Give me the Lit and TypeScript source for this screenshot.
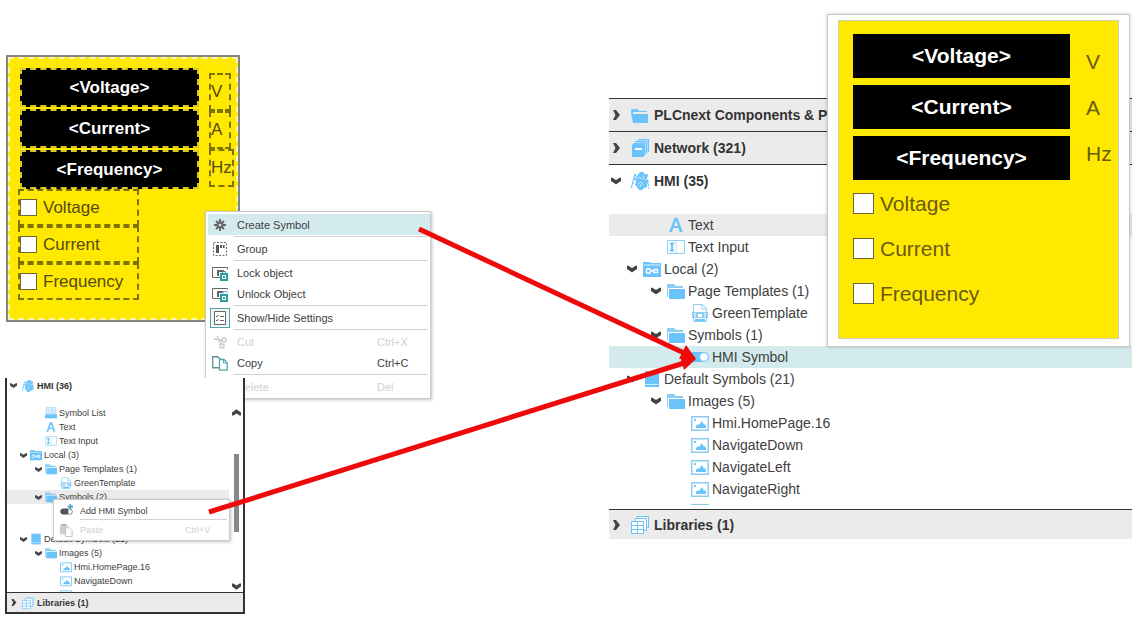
import { LitElement, html, svg, css, nothing } from "lit";
import { customElement, property } from "lit/decorators.js";
import { classMap } from "lit/directives/class-map.js";

const BLUE = "#6ac4fb";
const SOFT = "#8dcdf2";
const TEAL = "#2a9d9d";

const treeIcons: Record<string, unknown> = {
  folder: svg`<path fill="${BLUE}" d="M0 3h7l1 2h8v1H2v2h15v9H2L0 8z"/><path fill="${SOFT}" d="M0 3h6v1H1v4H0z"/>`,
  folderOpen: svg`<path fill="${SOFT}" d="M0 2h7l2 2h7v2H0z"/><path fill="${SOFT}" d="M0 5h1v10H0z"/><path fill="${BLUE}" d="M2 7h16v10H2z"/>`,
  network: svg`<path fill="${BLUE}" d="M7 0h11v12l-2 2V2H7z"/><path fill="${BLUE}" d="M4 2h12v12l-2 2V4H4z"/><path fill="${BLUE}" d="M1 6l2-2h11v12l-2 2H1z"/><path fill="#fff" d="M4 9h7v2H4z"/><path d="M3.500 3.500h11v12M6.500 1.500h10v12" fill="none" stroke="#c9eafd" stroke-width=".7"/>`,
  hmi: svg`<g fill="${BLUE}"><path d="M9 0h3l2 2 2 1v4l2 2-2 3v3l-3 1-2 2H8l-2-3-2-2 1-3-1-3 2-3z"/></g><path d="M5 2 1 14M4 2 0 16h2M16 2l1 3M17 11l1 6" stroke="${BLUE}" stroke-width="1.2" stroke-dasharray="3 1" fill="none"/><path d="m6 7 3-2 2 3M12 3l1 4 3 1M7 12l3-2 3 3M9 15l1-3" stroke="#e3f5ff" stroke-width=".7" fill="none"/>`,
  list: svg`<path d="M2 1h14v9H2z" fill="#e3f4fe" stroke="${SOFT}"/><path d="M5 4h2m2 0h4M5 7h2m2 0h4" stroke="${BLUE}"/><path d="M0 11h18v6H0z" fill="${BLUE}"/>`,
  text: svg`<path fill="${BLUE}" fill-rule="evenodd" d="M7.500 2h3.200l5 14h-3l-1.200-4H6.300L5 16H2zM7 10h4L9 4.800z"/>`,
  input: svg`<path d="M.5 2.500h17v13H.5z" fill="#fff" stroke="${SOFT}"/><path d="M3 5.500h4M5 5.500v7M3 12.500h4" stroke="${BLUE}" stroke-width="2"/><path d="M9 3v12" stroke="${SOFT}" stroke-width=".6"/>`,
  local: svg`<path fill="${BLUE}" d="M0 2h7l1 1h10v14H0z"/><path d="M1 5h16" stroke="#d9f0fe"/><g stroke="#fff" fill="none" stroke-width="1.400"><circle cx="5.500" cy="11" r="2.200"/><path d="M8 11h3M11 9.500h3.500v3H11z"/></g>`,
  template: svg`<path d="M2.500.5h9l4 4v13h-13z" fill="#fff" stroke="${SOFT}"/><path d="M11 1v4h4" fill="none" stroke="${SOFT}"/><path d="M1 8h16v6H1z" fill="${SOFT}"/><path d="m5 9-2 2 2 2m8-4 2 2-2 2" stroke="#fff" fill="none"/><path d="M7 10h4v3H7z" fill="#fff"/><path d="M4 16h10" stroke="${BLUE}" stroke-width="2"/>`,
  toggle: svg`<path d="M0 4h13a5 5 0 0 1 0 10H0z" fill="${BLUE}"/><circle cx="13" cy="9" r="4.200" fill="#fff" stroke="${SOFT}"/>`,
  book: svg`<path fill="${BLUE}" d="M2 1h14v16H2z"/><path d="M2 14.500h13" stroke="#c7e9fd"/>`,
  image: svg`<path d="M.75 2.750h16.500v13.500H.75z" fill="#fff" stroke="${SOFT}" stroke-width="1.500"/><path fill="${BLUE}" d="M5 14v-2l2-2 1 1 3-4 2 4 1-1 1 2v2zM3 5h2v2H3z"/>`,
  libs: svg`<g fill="#fff" stroke="${BLUE}"><path d="M6.500.5h11v11h-11z"/><path d="M4.500 2.500h11v12h-11z"/><path d="M.5 5.500h12v12H.5z"/><path d="M.5 9.500h12M.5 13.500h12M6.500 5.500v12"/></g>`,
};

const menuIcons: Record<string, unknown> = {
  create: svg`<g stroke="#666" stroke-width="2"><path d="M8 2v12M2 8h12M4 4l8 8M12 4l-8 8"/></g><circle cx="8" cy="8" r="3.500" fill="#666"/><circle cx="8" cy="8" r="1.300" fill="#d5ecee"/>`,
  group: svg`<path d="M1.500 1.500h13v13h-13z" fill="none" stroke="#666" stroke-dasharray="2 1.500"/><path d="M4 4h3v8H4zM8 4h2v3H8zM11 4h1.500v3H11z" fill="#555"/>`,
  lock: svg`<path d="M.5 2.500h15v2M.5 2.500v10H9" fill="none" stroke="#666"/><path d="M5 5h7v2H7v4H5z" fill="#666"/><path d="M9 9h6v6H9z" fill="#fff" stroke="${TEAL}" stroke-width="2"/><path d="M10.500 9V6.500h3V9" fill="none" stroke="${TEAL}"/><path d="M11 11h2v2h-2z" fill="${TEAL}"/>`,
  unlock: svg`<path d="M.5 2.500h15v1M.5 2.500v10H9" fill="none" stroke="#666"/><path d="M5 5h6v2H7v4H5z" fill="#666"/><path d="M9 9h6v6H9z" fill="#fff" stroke="${TEAL}" stroke-width="2"/><path d="M11 9V5.500h4V7" fill="none" stroke="#6ab6cf"/><path d="M11 11h2v2h-2z" fill="${TEAL}"/>`,
  settings: svg`<path d="M2.500 1.500h11v13h-11z" fill="#fff" stroke="#666"/><path d="m4 6 1 1 1.500-2M4 10l1 1 1.500-2M8 6.500h4M8 10.500h4" fill="none" stroke="#666"/>`,
  cut: svg`<g fill="none" stroke="#c9c9c9" stroke-width="1.500"><circle cx="12" cy="6" r="2"/><circle cx="10" cy="12" r="2"/><path d="m2 5 8 1.500M5 2l4 8"/></g>`,
  copy: svg`<path d="M.75 1.750h5l3 3v8h-8z" fill="#fff" stroke="#6b8a8a" stroke-width="1.300"/><path d="M7.500 4.500h4.500l3.200 3.200v7.500H7.500z" fill="#fff" stroke="#53a6aa" stroke-width="1.300"/><path d="M11.500 4.500V8h3.500" fill="none" stroke="#53a6aa"/>`,
  remove: svg`<path d="m3 3 10 10M13 3 3 13" stroke="#ccc" stroke-width="2"/>`,
  add: svg`<path d="M5 5h6v7H5a3.500 3.500 0 0 1 0-7z" fill="#555"/><path d="M11 5.500h1a3 3 0 0 1 0 6.500h-1" fill="#fff" stroke="#777"/><path d="M13 0v6M10 3h6" stroke="#3e9fc4" stroke-width="1.800"/>`,
  paste: svg`<path d="M1 2h9v11H1z" fill="#cfcfcf"/><path d="M3 1h5v2H3z" fill="#aaa"/><path d="M7.500 5.500H12l3 3v7H7.500z" fill="#fff" stroke="#bbb"/>`,
};

const chevron = (open: boolean) => html`<svg class="chev" viewBox="0 0 10 10" aria-hidden="true">
  ${open
    ? svg`<path fill="#444" d="M0 2l1-.5L5 4l4-2.500 1 .5v3L5 8.500 0 5z"/>`
    : svg`<path fill="#444" d="M2 0h3l4 5-4 5H2l2.500-5z"/>`}
</svg>`;

interface Node {
  label: string;
  icon?: string;
  level: number;
  open?: boolean;
  tone?: "grey" | "teal";
}

interface Section {
  label: string;
  icon: string;
  open?: boolean;
  nodes?: Node[];
}

interface MenuItem {
  label: string;
  icon: string;
  keys?: string;
  off?: boolean;
  active?: boolean;
  boxed?: boolean;
  line?: boolean;
}

@customElement("component-tree")
class ComponentTree extends LitElement {
  @property({ attribute: false }) sections: Section[] = [];
  @property({ type: Boolean, reflect: true }) compact = false;

  static styles = css`
    :host {
      display: block;
      background: #fff;
      --font: 14px;
      --row: 22px;
      --step: 24px;
      --lead: 18px;
      --chev: 10px;
      --chev-gap: 6px;
      --icon: 18px;
      --icon-gap: 3px;
      --head: 32px;
      --head-pad: 2px;
      --head-gap: 10px;
      --head-icon-gap: 5px;
      --peek: 5px;
      --peek-gap: 4px;
      font-size: var(--font);
      color: #404040;
    }
    :host([compact]) {
      --font: 9px;
      --row: 14px;
      --step: 15px;
      --lead: 13px;
      --chev: 7px;
      --chev-gap: 3px;
      --icon: 12px;
      --icon-gap: 2px;
      --head: 19px;
      --head-pad: 3px;
      --head-gap: 5px;
      --head-icon-gap: 3px;
      --peek: 4px;
      --peek-gap: 0px;
      border: 2px solid #333;
      border-top: 0;
    }
    svg { flex: none; display: block; }
    .chev { width: var(--chev); height: var(--chev); }
    .ico { width: var(--icon); height: var(--icon); }
    button {
      font: inherit;
      color: inherit;
      background: none;
      border: 0;
      padding: 0;
      margin: 0;
      display: flex;
      align-items: center;
      width: 100%;
      text-align: left;
      white-space: nowrap;
    }
    .head {
      height: calc(var(--head) + 1px);
      padding-left: var(--head-pad);
      border-top: 1px solid #333;
      background: #ebebeb;
      font-weight: bold;
      color: #333;
    }
    .head.open { background: #fff; }
    :host([compact]) .head.open { border-top: 0; height: 15px; }
    .head .ico { margin: 0 var(--head-icon-gap) 0 var(--head-gap); }
    :host(:not([compact])) .head.last { height: 30px; }
    .body { display: flex; }
    ul {
      list-style: none;
      margin: 0;
      padding: 17px 0 0;
      flex: 1;
      min-width: 0;
    }
    :host([compact]) ul { padding-top: 13px; }
    li { height: var(--row); }
    li.peek { height: var(--peek); margin-bottom: var(--peek-gap); overflow: hidden; }
    .row { height: var(--row); }
    .row .chev, .row .blank { margin-right: var(--chev-gap); }
    .blank { width: var(--chev); flex: none; }
    .row .ico { margin-right: var(--icon-gap); }
    .grey { background: #ebebeb; }
    .teal { background: #d4ebed; }
    .scroll {
      width: 14px;
      padding: 15px 0 1px;
      display: flex;
      flex-direction: column;
      align-items: center;
    }
    .scroll .chev { width: 9px; height: 9px; }
    .up { transform: rotate(180deg); }
    .track { flex: 1; width: 5px; padding-top: 37px; }
    .thumb { height: 78px; background: #888; }
  `;

  render() {
    return this.sections.map(
      (s, i) => html`
        <button class=${classMap({ head: true, open: !!s.open, last: i === this.sections.length - 1 })} aria-expanded=${s.open ? "true" : "false"}>
          ${chevron(!!s.open)}<svg class="ico" viewBox="0 0 18 18">${treeIcons[s.icon]}</svg>${s.label}
        </button>
        ${s.nodes
          ? html`<div class="body">
              <ul>
                ${s.nodes.map((n) => this.node(n))}
              </ul>
              ${this.compact
                ? html`<div class="scroll" aria-hidden="true">
                    <span class="up">${chevron(true)}</span>
                    <div class="track"><div class="thumb"></div></div>
                    ${chevron(true)}
                  </div>`
                : nothing}
            </div>`
          : nothing}
      `
    );
  }

  private node(n: Node) {
    if (!n.icon) return html`<li></li>`;
    return html`<li class=${classMap({ peek: !n.label })}>
      <button
        class=${classMap({ row: true, grey: n.tone === "grey", teal: n.tone === "teal" })}
        style="padding-left: calc(var(--lead) + ${n.level} * var(--step))"
      >
        ${n.open ? chevron(true) : html`<span class="blank"></span>`}<svg class="ico" viewBox="0 0 18 18">${treeIcons[n.icon]}</svg>${n.label}
      </button>
    </li>`;
  }
}

@customElement("context-menu")
class ContextMenu extends LitElement {
  @property({ attribute: false }) items: MenuItem[] = [];
  @property({ type: Boolean, reflect: true }) compact = false;

  static styles = css`
    :host {
      display: block;
      box-sizing: border-box;
      background: #fff;
      border: 1px solid #c9cccc;
      box-shadow: 1px 1px 3px rgba(0, 0, 0, 0.25);
      padding: 2px 0 1px 2px;
      font-size: 11px;
      color: #404040;
      --row: 21px;
      --keys: 53px;
      --lead: 4px;
      --gap: 9px;
      --icon: 16px;
    }
    :host([compact]) {
      font-size: 9px;
      padding: 2px;
      --row: 17px;
      --keys: 42px;
      --lead: 3px;
      --gap: 7px;
      --icon: 14px;
    }
    button {
      font: inherit;
      color: inherit;
      background: none;
      border: 0;
      margin: 0;
      width: 100%;
      height: var(--row);
      padding: 0 0 0 var(--lead);
      display: flex;
      align-items: center;
      gap: var(--gap);
      text-align: left;
    }
    button:disabled { color: #d0d0d0; }
    .active { background: #d4ebed; }
    svg { width: var(--icon); height: var(--icon); flex: none; }
    .boxed svg { outline: 1px solid #4fa3a5; outline-offset: 1px; background: #e9f4f5; }
    .label { flex: 1; }
    .keys { width: var(--keys); }
    hr { border: 0; height: 1px; background: #d2d2d2; margin: 1px 2px 1px 26px; }
    :host([compact]) hr { margin: 0 0 1px 24px; }
  `;

  render() {
    return this.items.map(
      (m) => html`
        <button class=${classMap({ active: !!m.active, boxed: !!m.boxed })} ?disabled=${m.off}>
          <svg viewBox="0 0 16 16" aria-hidden="true">${menuIcons[m.icon]}</svg>
          <span class="label">${m.label}</span>
          ${m.keys ? html`<span class="keys">${m.keys}</span>` : nothing}
        </button>
        ${m.line ? html`<hr />` : nothing}
      `
    );
  }
}

@customElement("meter-symbol")
class MeterSymbol extends LitElement {
  @property({ type: Boolean, reflect: true }) editing = false;

  static styles = css`
    :host {
      display: block;
      box-sizing: border-box;
      background: #ffe900;
      border: 1px solid #cfcfb4;
      padding: 13px 0 0 14px;
      height: 319px;
      font-size: 21px;
      color: #6a5a10;
    }
    .top { display: flex; gap: 16px; }
    .values { width: 217px; display: flex; flex-direction: column; gap: 7px; }
    .value {
      height: 44px;
      display: flex;
      align-items: center;
      justify-content: center;
      background: #000;
      color: #fff;
      font-weight: bold;
    }
    .units { padding-top: 5px; display: flex; flex-direction: column; }
    .unit { height: 46px; display: flex; align-items: center; }
    .checks { padding-top: 1px; }
    label { display: flex; align-items: center; gap: 6px; height: 45px; }
    input {
      appearance: none;
      box-sizing: border-box;
      width: 21px;
      height: 21px;
      margin: 0;
      background: #fff;
      border: 1px solid #6f6535;
    }
    :host([editing]) {
      border: 2px solid #85857c;
      outline: 2px dashed #f6f3c0;
      outline-offset: -4px;
      height: 267px;
      padding: 11px 0 0 10px;
      font-size: 17px;
      color: #574a10;
    }
    :host([editing]) .top { gap: 10px; padding-left: 2px; }
    :host([editing]) .values { width: 179px; gap: 2px; }
    :host([editing]) .value {
      box-sizing: border-box;
      height: 39px;
      border: 2px dashed #d8c628;
    }
    :host([editing]) .units { align-items: flex-start; }
    :host([editing]) .unit {
      box-sizing: border-box;
      height: 38px;
      min-width: 22px;
      border: 2px dashed #7f7300;
    }
    :host([editing]) .checks { width: 121px; padding: 0; }
    :host([editing]) label {
      box-sizing: border-box;
      height: 37px;
      border: 2px dashed #7f7300;
    }
    :host([editing]) input { width: 17px; height: 17px; }
  `;

  render() {
    return html`
      <div class="top">
        <div class="values">
          ${["Voltage", "Current", "Frequency"].map((v) => html`<div class="value">&lt;${v}&gt;</div>`)}
        </div>
        <div class="units">${["V", "A", "Hz"].map((u) => html`<div class="unit">${u}</div>`)}</div>
      </div>
      <div class="checks">
        ${["Voltage", "Current", "Frequency"].map((v) => html`<label><input type="checkbox" />${v}</label>`)}
      </div>
    `;
  }
}

const projectSections: Section[] = [
  { label: "PLCnext Components & Programs", icon: "folder" },
  { label: "Network (321)", icon: "network" },
  {
    label: "HMI (35)",
    icon: "hmi",
    open: true,
    nodes: [
      { label: "Text", icon: "text", level: 1, tone: "grey" },
      { label: "Text Input", icon: "input", level: 1 },
      { label: "Local (2)", icon: "local", level: 0, open: true },
      { label: "Page Templates (1)", icon: "folderOpen", level: 1, open: true },
      { label: "GreenTemplate", icon: "template", level: 2 },
      { label: "Symbols (1)", icon: "folderOpen", level: 1, open: true },
      { label: "HMI Symbol", icon: "toggle", level: 2, tone: "teal" },
      { label: "Default Symbols (21)", icon: "book", level: 0, open: true },
      { label: "Images (5)", icon: "folderOpen", level: 1, open: true },
      { label: "Hmi.HomePage.16", icon: "image", level: 2 },
      { label: "NavigateDown", icon: "image", level: 2 },
      { label: "NavigateLeft", icon: "image", level: 2 },
      { label: "NavigateRight", icon: "image", level: 2 },
      { label: "", icon: "image", level: 2 },
    ],
  },
  { label: "Libraries (1)", icon: "libs" },
];

const librarySections: Section[] = [
  {
    label: "HMI (36)",
    icon: "hmi",
    open: true,
    nodes: [
      { label: "Symbol List", icon: "list", level: 1 },
      { label: "Text", icon: "text", level: 1 },
      { label: "Text Input", icon: "input", level: 1 },
      { label: "Local (3)", icon: "local", level: 0, open: true },
      { label: "Page Templates (1)", icon: "folderOpen", level: 1, open: true },
      { label: "GreenTemplate", icon: "template", level: 2 },
      { label: "Symbols (2)", icon: "folderOpen", level: 1, open: true, tone: "grey" },
      { label: "", level: 2 },
      { label: "", level: 2 },
      { label: "Default Symbols (21)", icon: "book", level: 0, open: true },
      { label: "Images (5)", icon: "folderOpen", level: 1, open: true },
      { label: "Hmi.HomePage.16", icon: "image", level: 2 },
      { label: "NavigateDown", icon: "image", level: 2 },
      { label: "", icon: "image", level: 2 },
    ],
  },
  { label: "Libraries (1)", icon: "libs" },
];

const objectMenu: MenuItem[] = [
  { label: "Create Symbol", icon: "create", active: true, line: true },
  { label: "Group", icon: "group", line: true },
  { label: "Lock object", icon: "lock" },
  { label: "Unlock Object", icon: "unlock", line: true },
  { label: "Show/Hide Settings", icon: "settings", boxed: true, line: true },
  { label: "Cut", icon: "cut", keys: "Ctrl+X", off: true },
  { label: "Copy", icon: "copy", keys: "Ctrl+C", line: true },
  { label: "Delete", icon: "remove", keys: "Del", off: true },
];

const symbolMenu: MenuItem[] = [
  { label: "Add HMI Symbol", icon: "add", line: true },
  { label: "Paste", icon: "paste", keys: "Ctrl+V", off: true },
];

@customElement("app-root")
class AppRoot extends LitElement {
  static styles = css`
    :host {
      display: block;
      background: #fff;
      font-family: "Liberation Sans", Arial, sans-serif;
    }
    .page {
      position: relative;
      display: grid;
      grid-template-columns: 240px minmax(0, 1fr);
      column-gap: 364px;
      padding: 0 7px 12px 5px;
      overflow: hidden;
    }
    .left { display: flex; flex-direction: column; gap: 56px; padding-top: 55px; }
    .editor { position: relative; padding: 0 5px 0 1px; }
    .object-menu { position: absolute; left: 200px; top: 156px; width: 226px; z-index: 1; }
    .library { position: relative; z-index: 2; }
    .symbol-menu { position: absolute; left: 48px; top: 121px; width: 177px; }
    .right { position: relative; padding-top: 98px; }
    .preview {
      position: absolute;
      right: 2px;
      top: 14px;
      width: 303px;
      box-sizing: border-box;
      padding: 5px 10px 7px;
      background: #fff;
      border: 1px solid #c6c6c6;
      box-shadow: 0 0 4px rgba(0, 0, 0, 0.2);
    }
    .arrows {
      position: absolute;
      left: 0;
      top: 0;
      width: 720px;
      height: 626px;
      z-index: 3;
      pointer-events: none;
    }
  `;

  render() {
    return html`
      <main class="page">
        <section class="left">
          <div class="editor">
            <meter-symbol editing></meter-symbol>
            <context-menu class="object-menu" .items=${objectMenu}></context-menu>
          </div>
          <div class="library">
            <component-tree compact .sections=${librarySections}></component-tree>
            <context-menu class="symbol-menu" compact .items=${symbolMenu}></context-menu>
          </div>
        </section>
        <section class="right">
          <component-tree .sections=${projectSections}></component-tree>
          <div class="preview"><meter-symbol></meter-symbol></div>
        </section>
        <svg class="arrows" viewBox="0 0 720 626" aria-hidden="true">
          <g stroke="#ee0a0a" stroke-width="5" fill="none">
            <path d="M419 229 684 353" />
            <path d="M209 512 684 363" />
          </g>
          <path fill="#ee0a0a" d="M696 359 679 359 686 345zM696 359 684 370 680 356z" />
        </svg>
      </main>
    `;
  }
}
